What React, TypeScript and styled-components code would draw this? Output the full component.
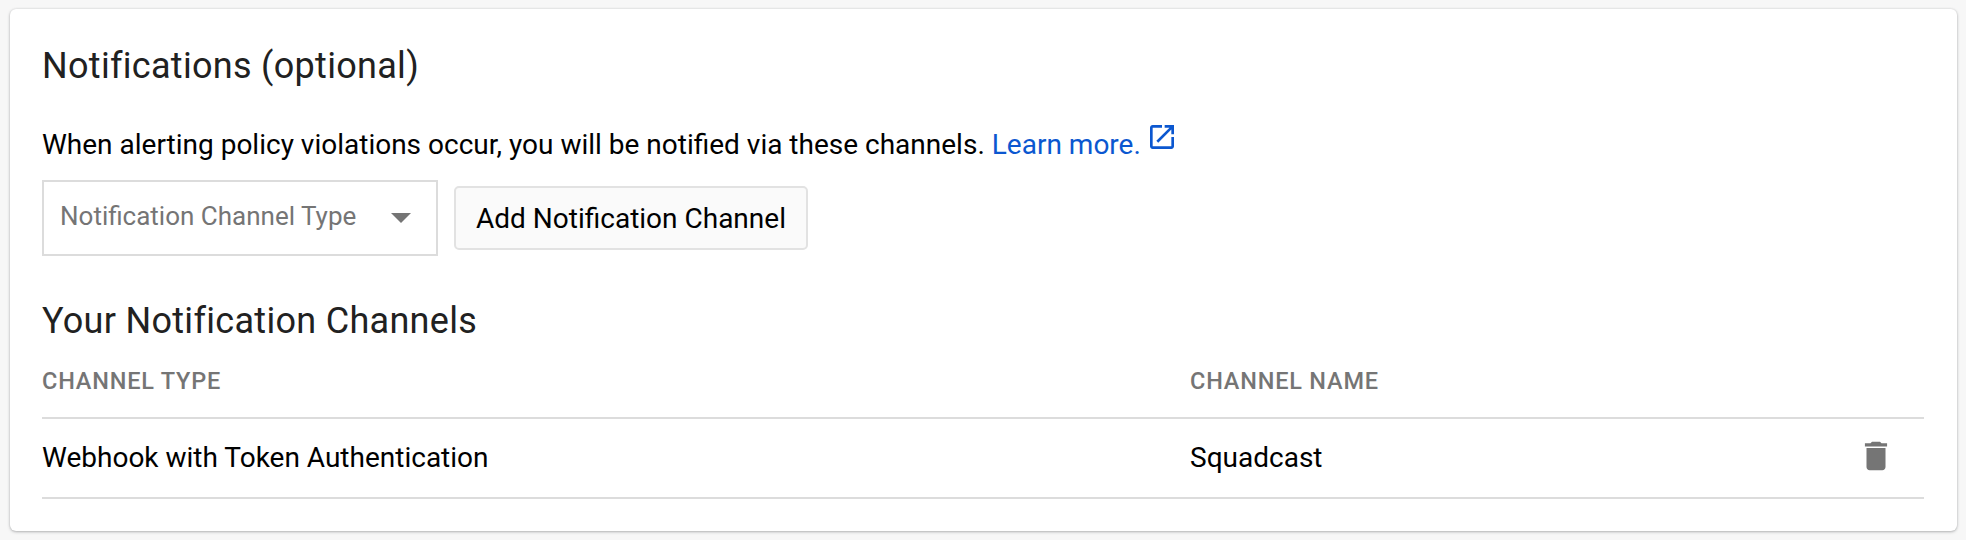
import React from 'react';
import styled, { createGlobalStyle } from 'styled-components';

const GlobalStyle = createGlobalStyle`
  html, body {
    margin: 0;
    padding: 0;
    background: #f7f7f7;
    font-family: Roboto, "Liberation Sans", sans-serif;
  }
`;

const Page = styled.div`
  width: 1966px;
  height: 540px;
  padding: 9px 9px 9px 10px;
  box-sizing: border-box;
`;

const Card = styled.section`
  box-sizing: border-box;
  height: 522px;
  padding: 37px 33px 0 32px;
  background: #fff;
  border-radius: 6px;
  box-shadow: 0 1px 3px rgba(60, 64, 67, 0.35), 0 0 2px rgba(60, 64, 67, 0.15);
`;

const Heading = styled.h2<{ $top: number }>`
  margin: ${({ $top }) => $top}px 0 0;
  font-size: 36px;
  line-height: 40px;
  font-weight: 400;
  letter-spacing: 0.3px;
  color: #212121;
`;

const Intro = styled.p`
  display: flex;
  align-items: flex-start;
  margin: 39px 0 0;
  font-size: 28px;
  line-height: 40px;
  color: #000;
`;

const LearnLink = styled.a`
  margin-left: 7px;
  color: #0b57d0;
  text-decoration: none;
`;

const OpenIcon = styled.svg`
  width: 32px;
  height: 32px;
  margin: -4px 0 0 5px;
  fill: #0b57d0;
`;

const Controls = styled.div`
  display: flex;
  align-items: center;
  gap: 16px;
  margin-top: 15px;
`;

const Select = styled.div`
  box-sizing: border-box;
  display: flex;
  align-items: center;
  justify-content: space-between;
  width: 396px;
  height: 76px;
  padding: 0 25px 4px 16px;
  border: 2px solid #dcdcdc;
  font-size: 26px;
  color: #757575;
`;

const Caret = styled.span`
  width: 0;
  height: 0;
  margin-top: 4px;
  border-left: 10px solid transparent;
  border-right: 10px solid transparent;
  border-top: 10px solid #757575;
`;

const AddButton = styled.button`
  box-sizing: border-box;
  width: 354px;
  height: 64px;
  padding: 0;
  border: 2px solid #e2e2e2;
  border-radius: 5px;
  background: #fafafa;
  font-family: inherit;
  font-size: 28px;
  color: #000;
`;

const Row = styled.div<{ $head?: boolean }>`
  box-sizing: border-box;
  display: grid;
  grid-template-columns: 1148px 1fr 67px;
  align-items: center;
  height: ${({ $head }) => ($head ? 78 : 80)}px;
  padding-bottom: ${({ $head }) => ($head ? 0 : 2)}px;
  border-bottom: 2px solid #dcdcdc;
  font-size: 28px;
  color: #000;
`;

const HeadCell = styled.span`
  align-self: start;
  padding-top: 27px;
  font-size: 23.5px;
  line-height: 26px;
  font-weight: 500;
  letter-spacing: 0.8px;
  color: #757575;
  text-transform: uppercase;
`;

const TrashIcon = styled.svg`
  width: 38px;
  height: 38px;
  margin-top: -3px;
  fill: #757575;
`;

export default function App() {
  return (
    <Page>
      <GlobalStyle />
      <Card>
        <Heading $top={0}>Notifications (optional)</Heading>
        <Intro>
          When alerting policy violations occur, you will be notified via these channels.
          <LearnLink href="#">Learn more.</LearnLink>
          <OpenIcon viewBox="0 0 24 24">
            <path d="M19 19H5V5h7V3H5c-1.11 0-2 .9-2 2v14c0 1.1.89 2 2 2h14c1.1 0 2-.9 2-2v-7h-2v7zM14 3v2h3.59l-9.83 9.83 1.41 1.41L19 6.41V10h2V3h-7z" />
          </OpenIcon>
        </Intro>
        <Controls>
          <Select>
            Notification Channel Type
            <Caret />
          </Select>
          <AddButton>Add Notification Channel</AddButton>
        </Controls>
        <Heading $top={45}>Your Notification Channels</Heading>
        <Row $head>
          <HeadCell>Channel type</HeadCell>
          <HeadCell>Channel name</HeadCell>
          <span />
        </Row>
        <Row>
          <span>Webhook with Token Authentication</span>
          <span>Squadcast</span>
          <TrashIcon viewBox="0 0 24 24">
            <path d="M6 19c0 1.1.9 2 2 2h8c1.1 0 2-.9 2-2V7H6v12zM19 4h-3.5l-1-1h-5l-1 1H5v2h14V4z" />
          </TrashIcon>
        </Row>
      </Card>
    </Page>
  );
}
